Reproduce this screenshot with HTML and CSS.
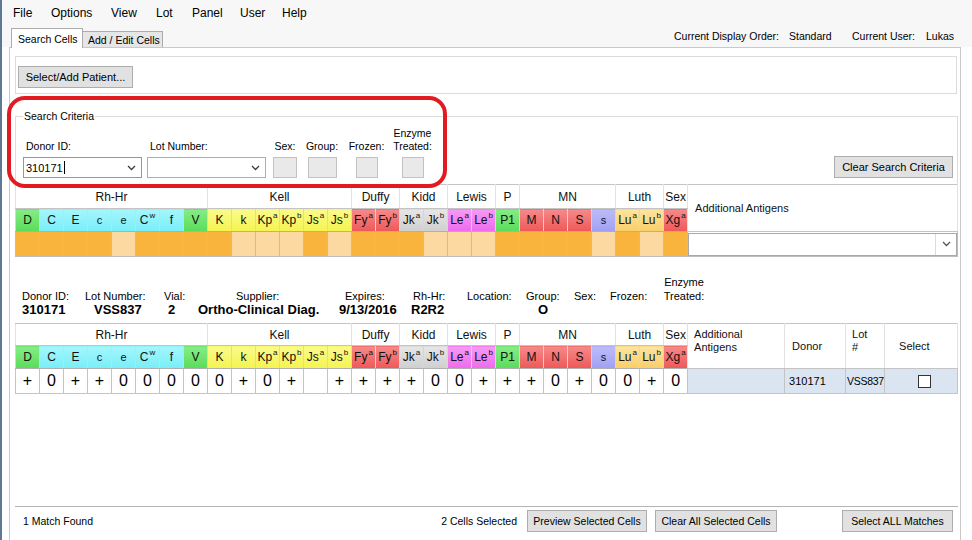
FILE: index.html
```html
<!DOCTYPE html>
<html>
<head>
<meta charset="utf-8">
<title>Search Cells</title>
<link rel="stylesheet" href="styles.css">
</head>
<body>
<div class="window">
  <div class="menubar">
    <span class="mi mi-file">File</span>
    <span class="mi mi-options">Options</span>
    <span class="mi mi-view">View</span>
    <span class="mi mi-lot">Lot</span>
    <span class="mi mi-panel">Panel</span>
    <span class="mi mi-user">User</span>
    <span class="mi">Help</span>
  </div>
  <div class="tabrow">
    <div class="tab tab-active">Search Cells</div>
    <div class="tab tab-inactive">Add / Edit Cells</div>
    <div class="status">
      <span class="st-a">Current Display Order:</span>
      <span class="st-b">Standard</span>
      <span class="st-c">Current User:</span>
      <span class="st-d">Lukas</span>
    </div>
  </div>
  <div class="tabpage">
    <div class="patient">
      <button class="btn btn-patient">Select/Add Patient...</button>
    </div>
    <fieldset class="criteria">
      <legend>Search Criteria</legend>
      <div class="fields">
        <div class="field f-donor">
          <label class="flabel">Donor ID:</label>
          <div class="combo combo-focus">
            <span class="cval">310171</span><span class="caret"></span>
            <svg class="chev" width="9" height="6" viewBox="0 0 9 6"><polyline points="1,1 4.5,4.5 8,1" fill="none" stroke="#3c3c3c" stroke-width="1.3"/></svg>
          </div>
        </div>
        <div class="field f-lot">
          <label class="flabel">Lot Number:</label>
          <div class="combo">
            <span class="cval"></span>
            <svg class="chev" width="9" height="6" viewBox="0 0 9 6"><polyline points="1,1 4.5,4.5 8,1" fill="none" stroke="#3c3c3c" stroke-width="1.3"/></svg>
          </div>
        </div>
        <div class="field f-small f-sex">
          <label class="flabel">Sex:</label>
          <div class="sbox sbox-sex"></div>
        </div>
        <div class="field f-small f-group">
          <label class="flabel">Group:</label>
          <div class="sbox sbox-group"></div>
        </div>
        <div class="field f-small f-frozen">
          <label class="flabel">Frozen:</label>
          <div class="sbox sbox-frozen"></div>
        </div>
        <div class="field f-small f-enz">
          <label class="flabel">Enzyme<br>Treated:</label>
          <div class="sbox sbox-enz"></div>
        </div>
        <button class="btn btn-clear">Clear Search Criteria</button>
      </div>
    </fieldset>

    <table class="grid g-search">
      <colgroup>
        <col class="c24"><col class="c24"><col class="c24"><col class="c24"><col class="c24"><col class="c24"><col class="c24"><col class="c24">
        <col class="c24"><col class="c24"><col class="c24"><col class="c24"><col class="c24"><col class="c24">
        <col class="c24"><col class="c24"><col class="c24"><col class="c24"><col class="c24"><col class="c24">
        <col class="c24"><col class="c24"><col class="c24"><col class="c24"><col class="c24">
        <col class="c24"><col class="c24"><col class="c24">
        <col>
      </colgroup>
      <tr class="r-grp">
        <th colspan="8">Rh-Hr</th><th colspan="6">Kell</th><th colspan="2">Duffy</th><th colspan="2">Kidd</th><th colspan="2">Lewis</th><th>P</th><th colspan="4">MN</th><th colspan="2">Luth</th><th>Sex</th>
        <th rowspan="2" class="addl-s">Additional Antigens</th>
      </tr>
      <tr class="r-ag">
        <td class="green">D</td><td class="cyan">C</td><td class="cyan">E</td><td class="cyan sm">c</td><td class="cyan sm">e</td><td class="cyan">C<sup>w</sup></td><td class="cyan">f</td><td class="green">V</td>
        <td class="yellow">K</td><td class="yellow">k</td><td class="yellow">Kp<sup>a</sup></td><td class="yellow">Kp<sup>b</sup></td><td class="yellow">Js<sup>a</sup></td><td class="yellow">Js<sup>b</sup></td>
        <td class="red">Fy<sup>a</sup></td><td class="red">Fy<sup>b</sup></td>
        <td class="grey">Jk<sup>a</sup></td><td class="grey">Jk<sup>b</sup></td>
        <td class="mag">Le<sup>a</sup></td><td class="mag">Le<sup>b</sup></td>
        <td class="green">P1</td>
        <td class="red">M</td><td class="red">N</td><td class="red">S</td><td class="blue sm">s</td>
        <td class="lu">Lu<sup>a</sup></td><td class="lu">Lu<sup>b</sup></td>
        <td class="red">Xg<sup>a</sup></td>
      </tr>
      <tr class="r-sv">
        <td class="o"></td><td class="o"></td><td class="o"></td><td class="o"></td><td class="p"></td><td class="o"></td><td class="o"></td><td class="o"></td>
        <td class="o"></td><td class="p"></td><td class="p"></td><td class="p"></td><td class="o"></td><td class="p"></td>
        <td class="o"></td><td class="o"></td>
        <td class="o"></td><td class="p"></td>
        <td class="p"></td><td class="p"></td>
        <td class="o"></td>
        <td class="o"></td><td class="o"></td><td class="o"></td><td class="p"></td>
        <td class="o"></td><td class="p"></td>
        <td class="o"></td>
        <td class="addl-combo">
          <div class="acombo">
            <span class="acombo-text"></span>
            <span class="acombo-btn"><svg width="9" height="6" viewBox="0 0 9 6"><polyline points="1,1 4.5,4.5 8,1" fill="none" stroke="#555" stroke-width="1.3"/></svg></span>
          </div>
        </td>
      </tr>
    </table>

    <div class="info">
      <div class="info-labels">
        <span class="il il-1">Donor ID:</span>
        <span class="il il-2">Lot Number:</span>
        <span class="il il-3">Vial:</span>
        <span class="il il-4">Supplier:</span>
        <span class="il il-5">Expires:</span>
        <span class="il il-6">Rh-Hr:</span>
        <span class="il il-7">Location:</span>
        <span class="il il-8">Group:</span>
        <span class="il il-9">Sex:</span>
        <span class="il il-10">Frozen:</span>
        <span class="il il-11">Enzyme<br>Treated:</span>
      </div>
      <div class="info-values">
        <span class="iv iv-1">310171</span>
        <span class="iv iv-2">VSS837</span>
        <span class="iv iv-3">2</span>
        <span class="iv iv-4">Ortho-Clinical Diag.</span>
        <span class="iv iv-5">9/13/2016</span>
        <span class="iv iv-6">R2R2</span>
        <span class="iv iv-7">O</span>
      </div>
    </div>

    <table class="grid g-result">
      <colgroup>
        <col class="c24"><col class="c24"><col class="c24"><col class="c24"><col class="c24"><col class="c24"><col class="c24"><col class="c24">
        <col class="c24"><col class="c24"><col class="c24"><col class="c24"><col class="c24"><col class="c24">
        <col class="c24"><col class="c24"><col class="c24"><col class="c24"><col class="c24"><col class="c24">
        <col class="c24"><col class="c24"><col class="c24"><col class="c24"><col class="c24">
        <col class="c24"><col class="c24"><col class="c24">
        <col class="c-addl"><col class="c-donor"><col class="c-lot"><col>
      </colgroup>
      <tr class="r-grp">
        <th colspan="8">Rh-Hr</th><th colspan="6">Kell</th><th colspan="2">Duffy</th><th colspan="2">Kidd</th><th colspan="2">Lewis</th><th>P</th><th colspan="4">MN</th><th colspan="2">Luth</th><th>Sex</th>
        <th rowspan="2" class="h-addl">Additional<br>Antigens</th>
        <th rowspan="2" class="h-donor">Donor</th>
        <th rowspan="2" class="h-lot">Lot<br>#</th>
        <th rowspan="2" class="h-select">Select</th>
      </tr>
      <tr class="r-ag">
        <td class="green">D</td><td class="cyan">C</td><td class="cyan">E</td><td class="cyan sm">c</td><td class="cyan sm">e</td><td class="cyan">C<sup>w</sup></td><td class="cyan">f</td><td class="green">V</td>
        <td class="yellow">K</td><td class="yellow">k</td><td class="yellow">Kp<sup>a</sup></td><td class="yellow">Kp<sup>b</sup></td><td class="yellow">Js<sup>a</sup></td><td class="yellow">Js<sup>b</sup></td>
        <td class="red">Fy<sup>a</sup></td><td class="red">Fy<sup>b</sup></td>
        <td class="grey">Jk<sup>a</sup></td><td class="grey">Jk<sup>b</sup></td>
        <td class="mag">Le<sup>a</sup></td><td class="mag">Le<sup>b</sup></td>
        <td class="green">P1</td>
        <td class="red">M</td><td class="red">N</td><td class="red">S</td><td class="blue sm">s</td>
        <td class="lu">Lu<sup>a</sup></td><td class="lu">Lu<sup>b</sup></td>
        <td class="red">Xg<sup>a</sup></td>
      </tr>
      <tr class="r-val">
        <td>+</td><td>0</td><td>+</td><td>+</td><td>0</td><td>0</td><td>0</td><td>0</td>
        <td>0</td><td>+</td><td>0</td><td>+</td><td></td><td>+</td>
        <td>+</td><td>+</td>
        <td>+</td><td>0</td>
        <td>0</td><td>+</td>
        <td>+</td>
        <td>+</td><td>0</td><td>+</td><td>0</td>
        <td>0</td><td>+</td>
        <td>0</td>
        <td class="sel"></td>
        <td class="sel txt">310171</td>
        <td class="sel txt txt-lot">VSS837</td>
        <td class="sel chk-cell"><span class="chk"></span></td>
      </tr>
    </table>

    <div class="spacer"></div>

    <div class="footer">
      <span class="ft-match">1 Match Found</span>
      <span class="ft-sel">2 Cells Selected</span>
      <button class="btn btn-preview">Preview Selected Cells</button>
      <button class="btn btn-clearall">Clear All Selected Cells</button>
      <button class="btn btn-selall">Select ALL Matches</button>
    </div>
  </div>
  <div class="highlight"></div>
</div>
</body>
</html>
```

FILE: styles.css
```css
* { box-sizing: border-box; }
html, body { margin: 0; padding: 0; }
body {
  width: 972px;
  height: 540px;
  overflow: hidden;
  background: #fff;
  font-family: "Liberation Sans", Arial, sans-serif;
  font-size: 11px;
  color: #000;
}
.window {
  position: relative;
  width: 972px;
  height: 540px;
  border-left: 2px solid #5f7894;
  display: flex;
  flex-direction: column;
  background: #fff;
}

/* menu */
.menubar {
  height: 25px;
  flex: none;
  display: flex;
  align-items: center;
  padding-left: 11px;
  font-size: 12px;
  background: #f7f7f7;
}
.mi { display: block; }
.mi-file { width: 38px; }
.mi-options { width: 60px; }
.mi-view { width: 45px; }
.mi-lot { width: 36px; }
.mi-panel { width: 48px; }
.mi-user { width: 42px; }

/* tabs */
.tabrow {
  height: 22px;
  flex: none;
  display: flex;
  align-items: flex-end;
  padding-left: 9px;
  position: relative;
  z-index: 1;
  background: #f7f7f7;
}
.tab {
  font-size: 10.5px;
  border: 1px solid #acacac;
  border-bottom: none;
  display: flex;
  align-items: center;
  padding-left: 5px;
}
.tab-active {
  width: 72px;
  height: 20px;
  margin-bottom: -1px;
  background: #fff;
  padding-left: 6px;
}
.tab-inactive {
  width: 81px;
  height: 16px;
  margin-left: -1px;
  background: #e6e6e6;
  padding-top: 1px;
}
.status {
  margin-left: auto;
  align-self: center;
  display: flex;
  font-size: 10.5px;
  padding-right: 16px;
}
.st-a { width: 115px; }
.st-b { width: 63px; }
.st-c { width: 74px; }
.st-d { width: 30px; }

/* tab page */
.tabpage {
  flex: 1;
  margin-left: 7px;
  width: 952px;
  border: 1px solid #c9c9c9;
  border-bottom: none;
  padding: 8px 2px 0 5px;
  display: flex;
  flex-direction: column;
  background: #fff;
}
.patient {
  width: 942px;
  height: 38px;
  border: 1px solid #dcdcdc;
  padding: 9px 0 0 2px;
}
.btn {
  font-family: "Liberation Sans", Arial, sans-serif;
  font-size: 11px;
  color: #000;
  background: #e1e1e1;
  border: 1px solid #adadad;
  height: 22px;
  padding: 0;
  margin: 0;
  display: block;
}
.btn-patient { width: 115px; }

/* search criteria */
.criteria {
  margin: 16px 0 0 0;
  padding: 0 4px 6px 7px;
  border: 1px solid #dcdcdc;
  border-bottom: none;
  min-width: 0;
}
.criteria legend {
  padding: 0 1px;
  font-size: 10.5px;
  line-height: 12px;
}
.fields {
  display: flex;
  align-items: flex-end;
  margin-top: 5px;
}
.field {
  display: flex;
  flex-direction: column;
}
.flabel {
  font-size: 10.5px;
  line-height: 13px;
  margin-bottom: 4px;
}
.f-donor, .f-lot { width: 119px; }
.f-donor .flabel, .f-lot .flabel { padding-left: 3px; }
.f-lot { margin-left: 5px; }
.f-small { align-items: center; text-align: center; }
.f-sex { margin-left: 7px; width: 24px; }
.f-group { margin-left: 9px; width: 32px; }
.f-frozen { margin-left: 11px; width: 35px; }
.f-enz { margin-left: 8px; width: 41px; }
.combo {
  height: 21px;
  border: 1px solid #abadb3;
  background: #fff;
  display: flex;
  align-items: center;
  padding-left: 2px;
  position: relative;
}
.combo-focus { border-color: #7a9cc8; }
.cval { font-size: 11px; }
.caret {
  display: inline-block;
  width: 1px;
  height: 13px;
  background: #000;
  margin-left: 1px;
}
.chev { margin-left: auto; margin-right: 5px; margin-top: 1px; }
.sbox {
  height: 21px;
  background: #e9e9e9;
  border: 1px solid #c2c2c2;
}
.sbox-sex { width: 24px; }
.sbox-group { width: 29px; }
.sbox-frozen { width: 22px; }
.sbox-enz { width: 22px; }
.btn-clear { margin-left: auto; width: 119px; margin-bottom: 0; }

/* grids */
.grid {
  border-collapse: collapse;
  table-layout: fixed;
  width: 943px;
  font-size: 12px;
}
.c24 { width: 24px; }
.c-addl { width: 97px; }
.c-donor { width: 61px; }
.c-lot { width: 39px; }
.grid td, .grid th {
  border: 1px solid #c4c4c4;
  padding: 0;
  text-align: center;
  font-weight: normal;
  white-space: nowrap;
  overflow: hidden;
  color: #111;
}
.grid sup {
  font-size: 8px;
  line-height: 0;
  vertical-align: 6px;
  margin-left: 1px;
}
.grid .sm { font-size: 11px; }
.r-grp th { background: #fff; border-left-color: #e2e2e2; border-right-color: #e2e2e2; }
.g-search .r-grp { height: 24px; }
.g-search .r-ag { height: 23px; }
.g-search .r-sv { height: 25px; }
.g-result .r-grp { height: 22px; }
.g-result .r-ag { height: 23px; }
.g-result .r-val { height: 25px; }
.r-ag td { border-color: #d6d6d6; border-bottom-color: #b0b0b0; }

.green  { background: linear-gradient(#86ec86, #5adc5a); }
.cyan   { background: linear-gradient(#a4f6fc, #78eef8); }
.yellow { background: linear-gradient(#fafa8c, #f4f450); }
.red    { background: linear-gradient(#f68a8a, #ee5858); }
.grey   { background: linear-gradient(#e6e6e6, #cfcfcf); }
.mag    { background: linear-gradient(#f69af6, #ee6aee); }
.blue   { background: linear-gradient(#bcbcfa, #a0a0f4); }
.lu     { background: linear-gradient(#fde4a0, #f9ce68); }

.r-sv td { border-color: #bdbdbd; }
.o { background: #f9b43e; }
.p { background: #fdd9a2; }

.addl-s {
  text-align: left !important;
  padding-left: 7px !important;
  font-size: 11px;
}
.addl-combo { padding: 0; }
.acombo {
  display: flex;
  height: 23px;
  border: 1px solid #a9a9a9;
  background: #fff;
}
.acombo-text { flex: 1; }
.acombo-btn {
  width: 21px;
  display: flex;
  align-items: center;
  justify-content: center;
  border-left: 1px solid #dcdcdc;
}

.r-val td { font-size: 16px; color: #000; }
.h-addl, .h-lot {
  text-align: left !important;
  vertical-align: top;
  padding: 4px 0 0 6px !important;
  font-size: 11px;
  line-height: 13px;
  white-space: normal;
}
.h-donor, .h-select {
  text-align: left !important;
  font-size: 11px;
  padding-left: 7px !important;
}
.h-select { padding-left: 14px !important; }
.r-val td.sel { background: #dbe5f1; }
.r-val td.txt {
  font-size: 11px;
  text-align: left;
  padding-left: 4px;
}
.r-val td.txt-lot {
  padding-left: 1px;
  letter-spacing: -0.3px;
  font-size: 10.5px;
}
.chk-cell { text-align: center; }
.chk {
  display: inline-block;
  width: 13px;
  height: 13px;
  border: 1px solid #333;
  background: #fff;
  vertical-align: middle;
  margin-left: 7px;
}

/* donor info */
.info {
  margin-top: 18px;
  padding-left: 7px;
  font-size: 11px;
  line-height: 14px;
}
.info-labels { display: flex; align-items: flex-end; }
.info-values { display: flex; font-weight: bold; font-size: 13px; }
.il-1 { width: 63px; }
.il-2 { width: 79px; }
.il-3 { width: 72px; }
.il-4 { width: 109px; }
.il-5 { width: 68px; }
.il-6 { width: 54px; }
.il-7 { width: 59px; }
.il-8 { width: 48px; }
.il-9 { width: 36px; }
.il-10 { width: 51px; }
.il-11 { width: 46px; text-align: center; }
.iv-1 { width: 72px; }
.iv-2 { width: 74px; }
.iv-3 { width: 30px; }
.iv-4 { width: 141px; }
.iv-5 { width: 72px; }
.iv-6 { width: 127px; }

.g-result { margin-top: 6px; }

.spacer { flex: 1; }

/* footer */
.footer {
  flex: none;
  height: 34px;
  border-top: 1px solid #b4b4b4;
  display: flex;
  align-items: flex-start;
  padding: 3px 5px 0 8px;
  font-size: 10.5px;
}
.footer > span { line-height: 22px; }
.ft-sel { margin-left: auto; }
.btn-preview { margin-left: 10px; width: 120px; font-size: 10.5px; }
.btn-clearall { margin-left: 8px; width: 122px; font-size: 10.5px; }
.btn-selall { margin-left: 65px; width: 111px; font-size: 10.5px; }

/* annotation overlay */
.highlight {
  position: absolute;
  left: 5px;
  top: 96px;
  width: 440px;
  height: 92px;
  border: 4px solid #e21b23;
  border-radius: 18px;
  pointer-events: none;
}
```
